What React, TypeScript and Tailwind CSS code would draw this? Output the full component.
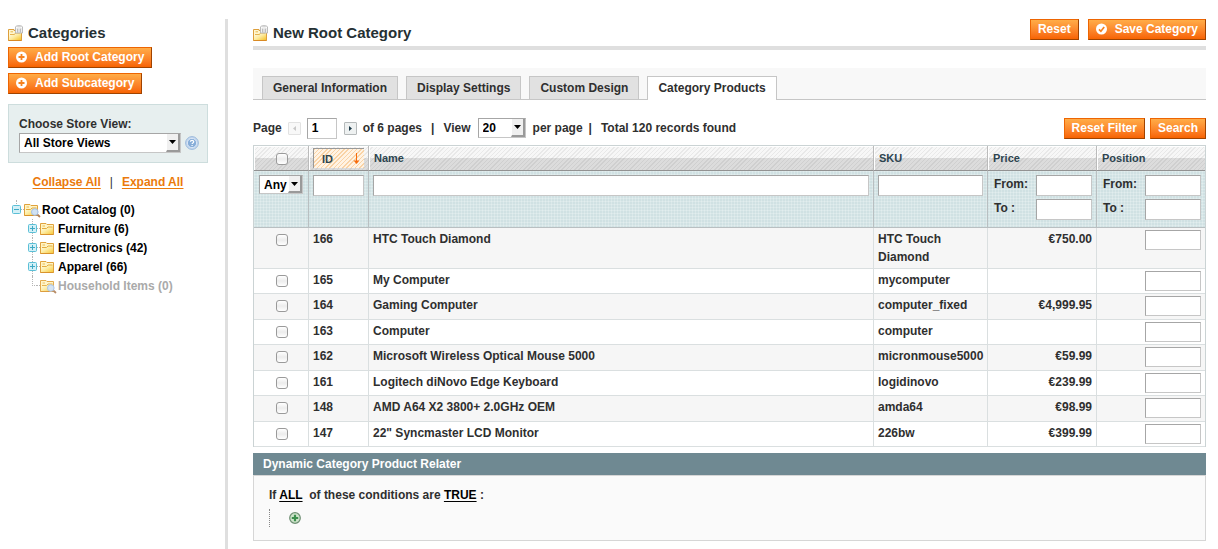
import type { ReactNode } from 'react';

type Product = { id: string; name: string; sku: string; price: string };

const products: Product[] = [
  { id: '166', name: 'HTC Touch Diamond', sku: 'HTC Touch Diamond', price: '€750.00' },
  { id: '165', name: 'My Computer', sku: 'mycomputer', price: '' },
  { id: '164', name: 'Gaming Computer', sku: 'computer_fixed', price: '€4,999.95' },
  { id: '163', name: 'Computer', sku: 'computer', price: '' },
  { id: '162', name: 'Microsoft Wireless Optical Mouse 5000', sku: 'micronmouse5000', price: '€59.99' },
  { id: '161', name: 'Logitech diNovo Edge Keyboard', sku: 'logidinovo', price: '€239.99' },
  { id: '148', name: 'AMD A64 X2 3800+ 2.0GHz OEM', sku: 'amda64', price: '€98.99' },
  { id: '147', name: '22" Syncmaster LCD Monitor', sku: '226bw', price: '€399.99' },
];

const tabs = ['General Information', 'Display Settings', 'Custom Design', 'Category Products'];

const boxBase =
  'block border border-t-[#a6a6a6] border-l-[#a6a6a6] border-r-[#c6c6c6] border-b-[#c6c6c6] bg-white px-1 text-xs font-bold text-black outline-none';
const inputBox = `${boxBase} h-[21px]`;
const rowInputBox = `${boxBase} h-5`;

function HeadIcon() {
  return (
    <svg width="16" height="17" viewBox="0 0 16 17" className="shrink-0" aria-hidden="true">
      <defs>
        <linearGradient id="head-folder" x1="0" y1="0" x2="1" y2="1">
          <stop offset="0" stopColor="#fffdf2" />
          <stop offset="0.5" stopColor="#fdeba0" />
          <stop offset="1" stopColor="#f5c22c" />
        </linearGradient>
        <linearGradient id="head-can" x1="0" y1="0" x2="1" y2="0">
          <stop offset="0" stopColor="#fafafa" />
          <stop offset="0.5" stopColor="#dcdcdc" />
          <stop offset="1" stopColor="#f4f4f4" />
        </linearGradient>
      </defs>
      <path d="M.5 15.500V4.500H6v1h7.500v10z" fill="#fff6cf" stroke="#dd9f3c" />
      <path d="M1 15V9.500h5.500l1-1.500H13v7z" fill="url(#head-folder)" />
      <path d="M2 9.500h4.500l1-1.500H12" fill="none" stroke="#e6b450" />
      <path d="M2.500 6.800h2.500" stroke="#e6b84e" />
      <path d="M.5 15.500h13" stroke="#d98a24" />
      <path d="M7.500 1.800C8 .3 14 .3 14.500 1.800V8h-7z" fill="url(#head-can)" stroke="#b4b4b4" strokeWidth=".9" />
      <path d="M9.500 3.500V7.500M12.500 3.500V7.500" stroke="#bdbdbd" />
      <path d="M8 2.300c1 .9 5 .9 6 0" fill="none" stroke="#fff" strokeWidth=".8" />
    </svg>
  );
}

function Folder({ search = false, faded = false }: { search?: boolean; faded?: boolean }) {
  return (
    <svg width="18" height="16" viewBox="0 0 18 16" className={faded ? 'shrink-0 opacity-90' : 'shrink-0'} aria-hidden="true">
      <defs>
        <linearGradient id="folder-fill" x1="0" y1="0" x2="1" y2="1">
          <stop offset="0" stopColor="#fffce8" />
          <stop offset="0.45" stopColor="#fdeea8" />
          <stop offset="1" stopColor="#f8c93c" />
        </linearGradient>
      </defs>
      <path d="M.5 13.500v-11H6l1 1h6.500v10z" fill="#fff4c4" stroke="#e0a23c" />
      <path d="M1 13V7.500h5.500L8 6h5v7z" fill="url(#folder-fill)" />
      <path d="M2 7.500h4.500L8 6h4.500" fill="none" stroke="#e3ab3f" />
      <path d="M2.500 5h2.500" stroke="#e8bb57" />
      <path d="M.5 13.500h13" stroke="#d9932c" />
      {search && (
        <g>
          <path d="m13 12.300 2.500 2.200" stroke="#b08058" strokeWidth="1.800" strokeLinecap="round" />
          <circle cx="10.800" cy="10" r="3.300" fill="#cfe3fa" fillOpacity=".95" stroke="#a5c0e4" />
        </g>
      )}
    </svg>
  );
}

function Toggle({ open = false }: { open?: boolean }) {
  return (
    <svg width="9" height="9" viewBox="0 0 9 9" className="block" aria-hidden="true">
      <rect x=".5" y=".5" width="8" height="8" rx="1" fill="#d3f0f7" stroke="#5bbfd6" />
      <path d={open ? 'M2 4.500h5' : 'M2 4.500h5M4.500 2v5'} stroke="#3fa9c4" />
    </svg>
  );
}

function Arrow() {
  return (
    <span className="pointer-events-none absolute top-px right-px bottom-px flex w-[14px] items-center justify-center border-r-2 border-b-2 border-l border-l-white border-r-[#9a9a9a] border-b-[#9a9a9a] bg-[#f0f0f0]">
      <svg width="7" height="4" viewBox="0 0 7 4" aria-hidden="true">
        <path d="M0 0h7L3.500 4z" fill="#000" />
      </svg>
    </span>
  );
}

function Select({ label, value, className, options = [] }: { label: string; value: string; className: string; options?: string[] }) {
  return (
    <span className={`relative block shrink-0 ${className}`}>
      <select
        aria-label={label}
        defaultValue={value}
        className="block h-full w-full appearance-none border border-t-[#a6a6a6] border-l-[#a6a6a6] border-r-[#c6c6c6] border-b-[#c6c6c6] bg-white pl-1 text-xs leading-4 font-bold text-black outline-none"
      >
        {[value, ...options].map((o) => (
          <option key={o}>{o}</option>
        ))}
      </select>
      <Arrow />
    </span>
  );
}

function Button({ children, icon }: { children: ReactNode; icon?: 'add' | 'save' }) {
  return (
    <button
      type="button"
      className="flex h-[21px] items-center border border-t-[#ed6502] border-l-[#ed6502] border-r-[#a04300] border-b-[#a04300] bg-linear-to-b from-[#ffac47] to-[#f76300] px-[7px] pb-px text-xs leading-4 font-bold whitespace-nowrap text-white"
    >
      {icon && (
        <svg width="12" height="12" viewBox="0 0 12 12" className="mr-[7px]" aria-hidden="true">
          <circle cx="5.500" cy="6" r="5.500" fill="#fff" />
          {icon === 'add' ? (
            <path d="M5.500 3v6M2.500 6h6" stroke="#f58220" strokeWidth="1.800" />
          ) : (
            <path d="m3 6.300 1.900 2L8.200 4" fill="none" stroke="#f58220" strokeWidth="1.700" />
          )}
        </svg>
      )}
      {children}
    </button>
  );
}

function Check({ label }: { label: string }) {
  return (
    <input
      type="checkbox"
      aria-label={label}
      className="block size-3 appearance-none rounded-[3px] border border-[#9a9a9a] bg-linear-to-b from-white via-[#ececec] to-white"
    />
  );
}

function TreeNode({ label, root = false, leaf = false, last = false }: { label: string; root?: boolean; leaf?: boolean; last?: boolean }) {
  return (
    <li className={`flex h-[19px] items-center ${root ? '' : 'pl-4'}`}>
      <span className="relative flex h-full w-[9px] items-center">
        <span
          className={`absolute top-0 left-1 border-l border-dotted border-[#b5b5b5] ${root || last ? 'h-1/2' : 'h-full'}`}
        />
        {!leaf && (
          <span className="relative">
            <Toggle open={root} />
          </span>
        )}
        {leaf && <span className="ml-1 w-[5px] border-t border-dotted border-[#b5b5b5]" />}
      </span>
      <span className="w-[3px] border-t border-dotted border-[#b5b5b5]" />
      <Folder search={root || leaf} faded={leaf} />
      <a href="#" className={leaf ? 'text-[#aaa]' : 'text-black'}>
        {label}
      </a>
    </li>
  );
}

function Range({ name }: { name: string }) {
  return (
    <div className="flex flex-col gap-[3px] pl-0.5">
      {['From:', 'To :'].map((t) => (
        <label key={t} className="flex items-start justify-between leading-[18px]">
          {t}
          <input type="text" aria-label={`${name} ${t}`} className={`${inputBox} w-14`} />
        </label>
      ))}
    </div>
  );
}

const headCell =
  'h-[25px] border-r border-b border-r-[#bbb] border-b-[#929292] px-[5px] text-left shadow-[inset_1px_1px_0_#fff] last:border-r-0';
const filterCell = 'h-[57px] border-r border-b border-[#b9bfc1] px-1 pt-1 align-top last:border-r-0';
const bodyCell = 'border-r border-b border-[#dadfe0] px-1 py-0.5 align-top last:border-r-0';

export default function App() {
  return (
    <div className="flex min-h-screen bg-white pt-[19px] font-['Liberation_Sans',Arial,sans-serif] text-xs leading-[18px] font-bold text-[#2f2f2f]">
      <aside className="w-[228px] shrink-0 border-r-[3px] border-[#dfdfdf] pr-[17px] pl-2">
        <h2 className="flex h-7 items-center gap-1 text-[15px] text-[#253033]">
          <HeadIcon />
          Categories
        </h2>
        <div className="flex flex-col items-start gap-[5px]">
          <Button icon="add">Add Root Category</Button>
          <Button icon="add">Add Subcategory</Button>
        </div>
        <div className="mt-[10px] h-[59px] border border-[#cddddd] bg-[#e7efef] pt-[10px] pl-[10px]">
          <p>Choose Store View:</p>
          <div className="flex items-center gap-1">
            <Select label="Choose Store View" value="All Store Views" className="h-5 w-[162px]" />
            <svg width="14" height="14" viewBox="0 0 14 14" role="img" aria-label="Help">
              <circle cx="7" cy="7" r="6.400" fill="#c3d7ee" stroke="#9dbbdc" />
              <circle cx="7" cy="7" r="4.600" fill="#86add8" stroke="#e4eef9" strokeWidth=".8" />
              <path d="M5.400 5.800c0-2 3.300-2 3.300 0 0 1.200-1.600 1.100-1.600 2.300M7.100 9v1.100" fill="none" stroke="#fff" strokeWidth="1.200" />
            </svg>
          </div>
        </div>
        <div className="mt-[10px] flex justify-center gap-[9px] text-[#eb7a0c]">
          <a href="#" className="underline underline-offset-2">Collapse All</a>
          <span className="font-normal text-[#2f2f2f]">|</span>
          <a href="#" className="underline underline-offset-2">Expand All</a>
        </div>
        <ul className="mt-[9px] pl-1">
          <TreeNode label="Root Catalog (0)" root />
          <TreeNode label="Furniture (6)" />
          <TreeNode label="Electronics (42)" />
          <TreeNode label="Apparel (66)" />
          <TreeNode label="Household Items (0)" leaf last />
        </ul>
      </aside>

      <main className="min-w-0 flex-1 pr-3 pb-2 pl-[25px]">
        <header className="flex h-[31px] items-start justify-between border-b-4 border-[#dfdfdf]">
          <h1 className="flex h-7 items-center gap-1 text-[15px] text-[#253033]">
            <HeadIcon />
            New Root Category
          </h1>
          <div className="flex gap-[9px]">
            <Button>Reset</Button>
            <Button icon="save">Save Category</Button>
          </div>
        </header>

        <nav className="mt-[18px] flex h-8 items-end gap-2 border-b border-[#c6c6c6] bg-[#f8f8f8] pl-[9px]">
          {tabs.map((t) =>
            t === 'Category Products' ? (
              <a key={t} href="#" className="-mb-px h-6 border border-b-0 border-[#c6c6c6] bg-white px-[10px] pt-0.5">
                {t}
              </a>
            ) : (
              <a key={t} href="#" className="h-[23px] border border-b-0 border-[#c6c6c6] bg-[#e1e1e1] px-[10px] pt-0.5">
                {t}
              </a>
            ),
          )}
        </nav>

        <div className="mt-[18px] flex h-[21px] items-center justify-between">
          <div className="flex items-center pb-px">
            <label htmlFor="page">Page</label>
            <button type="button" disabled aria-label="Previous page" className="ml-[6px] flex size-[13px] items-center justify-center rounded-[1px] border border-[#e2e2e2] bg-[#f8f8f8]">
              <svg width="3" height="5" viewBox="0 0 3 5"><path d="M3 0v5L0 2.500z" fill="#c8c8c8" /></svg>
            </button>
            <input id="page" type="text" defaultValue="1" className={`${inputBox} mr-[7px] ml-[6px] w-[30px]`} />
            <button type="button" aria-label="Next page" className="mr-[6px] flex size-[13px] items-center justify-center rounded-[1px] border border-[#b5b9ba] bg-[#eef1f1]">
              <svg width="3" height="5" viewBox="0 0 3 5"><path d="M0 0v5l3-2.500z" fill="#1d3b4a" /></svg>
            </button>
            <span>of 6 pages</span>
            <span className="mx-[9px]">|</span>
            <span>View</span>
            <Select label="Per page" value="20" options={['30', '50']} className="mx-[7px] h-5 w-12" />
            <span>per page</span>
            <span className="mx-[6px]">|</span>
            <span className="ml-[3px]">Total 120 records found</span>
          </div>
          <div className="flex gap-[5px]">
            <Button>Reset Filter</Button>
            <Button>Search</Button>
          </div>
        </div>

        <table className="mt-[6px] w-full table-fixed border-separate border-spacing-0 border-x border-t border-[#cbd3d4]">
          <colgroup>
            <col className="w-[55px]" />
            <col className="w-[60px]" />
            <col />
            <col className="w-[114px]" />
            <col className="w-[109px]" />
            <col className="w-[108px]" />
          </colgroup>
          <thead>
            <tr className="bg-[repeating-linear-gradient(135deg,#0000000f_0_1px,#ffffff00_1px_3px),linear-gradient(#f7f7f7_0_50%,#dcdcdc_50%)] text-[11px] leading-4 text-[#2d444f]">
              <th className={headCell}>
                <div className="flex justify-center pt-0.5 pl-0.5">
                  <Check label="Select all" />
                </div>
              </th>
              <th className="h-[25px] border-r border-b border-r-[#bbb] border-b-[#929292] px-1 shadow-[inset_1px_1px_0_#fff]">
                <a href="#" className="flex h-5 items-center justify-between border-t border-l border-[#999] bg-[repeating-linear-gradient(135deg,#f9d3a6_0_1px,#fff3e4_1px_3px)] pr-1 pl-2">
                  ID
                  <svg width="7" height="11" viewBox="0 0 7 11" aria-hidden="true">
                    <path d="M3.500 0v9" stroke="#f76b0b" />
                    <path d="M.5 7.500h6L3.500 11z" fill="#f76b0b" />
                  </svg>
                </a>
              </th>
              <th className={headCell}>Name</th>
              <th className={headCell}>SKU</th>
              <th className={headCell}>Price</th>
              <th className={headCell}>Position</th>
            </tr>
            <tr className="bg-[#d0e1e3] bg-[linear-gradient(#ffffff38_1px,transparent_1px),linear-gradient(90deg,#ffffff38_1px,transparent_1px)] bg-size-[3px_3px] text-left">
              <td className={filterCell}>
                <Select label="Selected" value="Any" options={['Yes', 'No']} className="ml-px h-[19px] w-11" />
              </td>
              <td className={filterCell}>
                <input type="text" aria-label="Filter ID" className={`${inputBox} w-full`} />
              </td>
              <td className={filterCell}>
                <input type="text" aria-label="Filter name" className={`${inputBox} w-full`} />
              </td>
              <td className={filterCell}>
                <input type="text" aria-label="Filter SKU" className={`${inputBox} w-full`} />
              </td>
              <td className={filterCell}>
                <Range name="Price" />
              </td>
              <td className={filterCell}>
                <Range name="Position" />
              </td>
            </tr>
          </thead>
          <tbody>
            {products.map((p) => (
              <tr key={p.id} className="h-[25px] odd:h-[26px] odd:bg-[#f6f6f6]">
                <td className={bodyCell}>
                  <div className="flex justify-center pt-1 pl-0.5">
                    <Check label={`Select ${p.name}`} />
                  </div>
                </td>
                <td className={bodyCell}>{p.id}</td>
                <td className={bodyCell}>{p.name}</td>
                <td className={bodyCell}>{p.sku}</td>
                <td className={`${bodyCell} text-right`}>{p.price}</td>
                <td className={bodyCell}>
                  <input type="text" aria-label={`Position of ${p.name}`} className={`${rowInputBox} ml-auto w-14`} />
                </td>
              </tr>
            ))}
          </tbody>
        </table>

        <section className="mt-[6px]">
          <h2 className="h-[22px] bg-[#6f8992] px-[10px] pt-0.5 text-white">Dynamic Category Product Relater</h2>
          <div className="h-[66px] border border-[#d6d6d6] bg-[#fafafa] px-[15px] pt-[10px]">
            <p>
              If <a href="#" className="text-black underline underline-offset-2">ALL</a>
              &nbsp; of these conditions are <a href="#" className="text-black underline underline-offset-2">TRUE</a> :
            </p>
            <div className="mt-[5px] flex h-[18px] items-center border-l border-dotted border-[#888] pl-[19px]">
              <button type="button" aria-label="Add condition">
                <svg width="12" height="12" viewBox="0 0 12 12" className="block">
                  <circle cx="6" cy="6" r="5.300" fill="#cfe5cb" stroke="#6f8f74" strokeWidth="1.200" />
                  <path d="M6 2.800v6.400M2.800 6h6.400" stroke="#3c8f4d" strokeWidth="2.200" />
                </svg>
              </button>
            </div>
          </div>
        </section>
      </main>
    </div>
  );
}
